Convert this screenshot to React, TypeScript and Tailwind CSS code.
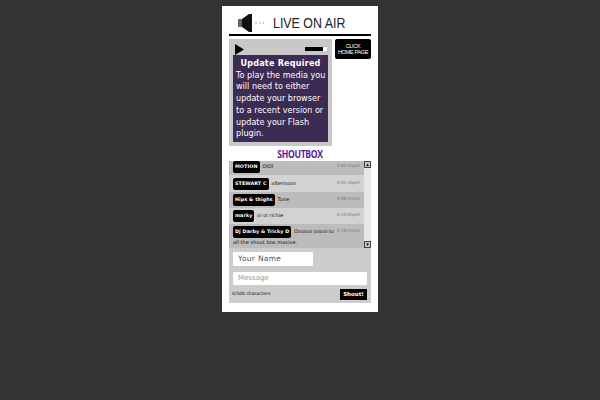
function Row({ name, text, time, dark, h, pt }: { name: string; text: string; time: string; dark: boolean; h: string; pt: string }) {
  return (
    <div className={`overflow-hidden px-[4px] ${h} ${pt} ${dark ? "bg-[#bcbcbc]" : "bg-[#d2d2d2]"}`}>
      <span className="float-right mt-[1px] text-[4.3px] leading-[7px] text-[#777]">{time}</span>
      <div className="text-[5.1px] leading-[8px] text-[#111]">
        <span className="mr-[1px] inline-block rounded-[2px] bg-black px-[2px] align-middle text-[4.8px] font-bold leading-[12px] tracking-[0.1px] text-white">{name}</span>
        {" "}{text}
      </div>
    </div>
  );
}
export default function App() {
  return (
    <div className={`min-h-[400px] bg-[#333333] pt-[6px] font-["DejaVu_Sans",sans-serif]`}>
      <div className="mx-auto h-[306px] w-[156px] bg-white px-[7px]">
        <div className="flex h-[30px] items-center border-b-2 border-black pt-[6px]">
          <svg width="28" height="20" viewBox="0 0 28 20" className="ml-[8px]">
            <rect x="1" y="6" width="5" height="8" fill="#666" />
            <path d="M5 6 L12 1 H15 V19 H12 L5 14 Z" fill="#111" />
            <circle cx="19" cy="10" r="0.7" fill="#999" /><circle cx="23" cy="10" r="0.7" fill="#999" /><circle cx="26.5" cy="10" r="0.7" fill="#999" />
          </svg>
          <span className={`ml-[8px] origin-left scale-x-[0.8] font-["Liberation_Sans",sans-serif] text-[15.5px] text-[#222]`}>LIVE ON AIR</span>
        </div>
        <div className="mt-[3px] flex items-start justify-between">
          <div className="h-[107px] w-[103px] bg-[#c8c8c8] px-[4px]">
            <div className="relative h-[16px]">
              <svg width="9" height="11" viewBox="0 0 9 11" className="absolute left-[2px] top-[5px]"><path d="M0 0 L9 5.5 L0 11 Z" fill="#000" /></svg>
              <div className="absolute left-[72px] top-[8px] h-[4px] w-[18px] bg-black" />
              <div className="absolute left-[90px] top-[8px] h-[4px] w-[4px] bg-white" />
            </div>
            <div className="h-[87px] bg-[#3c2b52] pl-[3px] pt-[3px] text-[8.1px] leading-[11.7px] text-white">
              <div className="pr-[3px] text-center font-bold tracking-[0.2px]">Update Required</div>
              <div>To play the media you will need to either update your browser to a recent version or update your Flash plugin.</div>
            </div>
          </div>
          <div className={`flex h-[20px] w-[36px] flex-col items-center justify-center whitespace-nowrap rounded-[2px] bg-black text-center font-["Liberation_Sans",sans-serif] text-[5.5px] leading-[6.5px] tracking-[-0.3px] text-white`}>
            <span>CLICK</span><span>HOME PAGE</span>
          </div>
        </div>
        <div className={`mt-[2px] h-[13px] scale-x-[0.82] text-center font-["Open_Sans",sans-serif] text-[10.5px] font-bold leading-[13px] tracking-[-0.4px] text-[#5a189a]`}>SHOUTBOX</div>
        <div className="h-[142px] bg-[#cccccc]">
          <div className="flex h-[87px]">
            <div className="w-[135px] overflow-hidden">
              <Row name="MOTION" text="OIOI" time="3:00:25pm" dark h="h-[14px]" pt="pt-[0px]" />
              <Row name="STEWART C" text="afternoon" time="3:01:16pm" dark={false} h="h-[17px]" pt="pt-[3px]" />
              <Row name="Hips & thighs" text="Tune" time="3:09:52pm" dark h="h-[16px]" pt="pt-[2px]" />
              <Row name="marky" text="oi oi richie" time="3:14:05pm" dark={false} h="h-[16px]" pt="pt-[2px]" />
              <Row name="Dj Darby & Tricky D" text="Oooooi ooooi to all the shout box masive." time="3:29:14pm" dark h="h-[24px]" pt="pt-[2px]" />
            </div>
            <div className="flex w-[7px] flex-col justify-between bg-[#e8e8e2]">
              <div className="flex h-[7px] items-center justify-center border border-[#444] bg-[#c4c4c4] text-[5px] leading-none">▴</div>
              <div className="flex h-[7px] items-center justify-center border border-[#444] bg-[#c4c4c4] text-[5px] leading-none">▾</div>
            </div>
          </div>
          <div className="px-[4px] pt-[4px]">
            <div className="flex h-[14px] w-[80px] items-center rounded-[1px] bg-white px-[5px] text-[7.5px] tracking-[0.3px] text-[#555]">Your Name</div>
            <div className="mt-[6px] flex h-[13px] w-[134px] items-center rounded-[1px] bg-white px-[5px] text-[7px] text-[#999]">Message</div>
            <div className="mt-[4px] flex items-center justify-between">
              <span className="-ml-[1px] text-[4.5px] text-[#111]">0/500 characters</span>
              <span className="flex h-[11px] w-[27px] items-center justify-center bg-black text-[5.5px] font-bold text-white">Shout!</span>
            </div>
          </div>
        </div>
      </div>
    </div>
  );
}
